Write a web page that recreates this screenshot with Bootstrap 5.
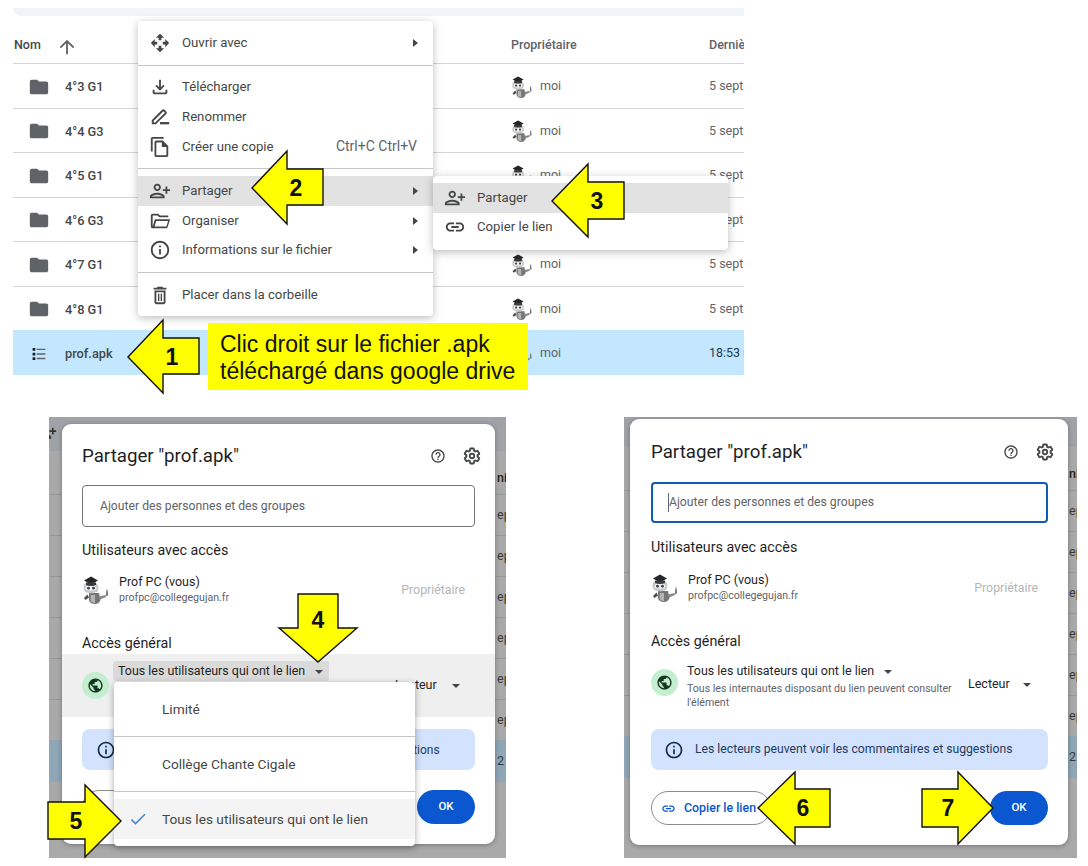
<!DOCTYPE html>
<html lang="fr">
<head>
<meta charset="UTF-8">
<title>Partager prof.apk</title>
<link href="https://cdn.jsdelivr.net/npm/bootstrap@5.3.0/dist/css/bootstrap.min.css" rel="stylesheet">
<style>
html, body { margin: 0; background: #fff; overflow: hidden; }
body { font-family: Roboto, "Liberation Sans", sans-serif; color: #3c4043; font-size: 12.5px; }
.planche { position: relative; width: 1088px; height: 866px; overflow: hidden; padding-top: 8px; }
.ico { width: 20px; height: 20px; fill: #444746; flex: none; }

/* liste drive */
.drive { margin-left: 13px; width: 731px; overflow: hidden; }
.bandeau { height: 8px; background: #f0f4f9; border-bottom-left-radius: 8px; }
.entete { height: 47px; color: #444746; font-weight: 500; padding-top: 20px; }
.entete .nom-h { margin-left: 1px; }
.entete .ico { width: 16px; height: 16px; margin-left: 19px; margin-top: 0; }
.ligne { height: 44.5px; border-top: 1px solid #d3d5d7; padding-top: 2px; }
.ligne-sel { background: #c2e7ff; border-top: 0; height: 45px; }
.c-nom { width: 498px; flex: none; }
.c-nom .ico { width: 22px; height: 22px; margin-left: 15px; margin-right: 15px; fill: #5f6368; }
.c-prop { width: 198px; flex: none; color: #5f6368; }
.c-date { white-space: nowrap; color: #5f6368; }
.ligne-sel .c-date { color: #1f3a4d; }
.nom-txt { font-weight: 500; color: #444746; font-size: 12.8px; }
.ava { width: 22px; height: 24px; margin-right: 7px; flex: none; }

/* menus */
.menu-ctx { --bs-dropdown-padding-y: 0; --bs-dropdown-padding-x: 0; border: 0; border-radius: 4px; box-shadow: 0 2px 8px rgba(60,64,67,.35); padding: 7px 0; font-size: 13.2px; }
.menu-a { left: 138px; top: 21px; width: 295px; height: 295px; z-index: 10; }
.menu-b { left: 433px; top: 176px; width: 295px; height: 74px; z-index: 11; }
.menu-ctx .dropdown-item { height: 29.6px; padding: 0 16px 0 12px; display: flex; align-items: center; gap: 12px; color: #444746; }
.menu-ctx .ico { width: 22px; height: 22px; margin: 0 -1px; }
.menu-ctx .dropdown-divider { margin: 7px 0; border-color: #c4c6c8; opacity: 1; }
.menu-ctx .hl { background: #e2e2e2; }
.raccourci { margin-left: auto; color: #5f6368; font-size: 14px; }
.tri-d { margin-left: auto; width: 0; height: 0; border-left: 5px solid #444746; border-top: 4.5px solid transparent; border-bottom: 4.5px solid transparent; margin-right: -0.5px; }
.tri-b { display: inline-block; width: 0; height: 0; border-top: 4px solid #444746; border-left: 4.5px solid transparent; border-right: 4.5px solid transparent; vertical-align: middle; }

.consigne { position: absolute; left: 208px; top: 323px; width: 320px; height: 67px; background: #ff0; color: #111; font-family: "Liberation Sans", Arial, sans-serif; font-size: 23px; line-height: 27px; padding: 8px 0 0 12px; z-index: 12; }

/* panneaux du bas */
.panneaux { margin-top: 42px; }
.fond { position: relative; height: 441px; background: #a9a9a9; overflow: hidden; flex: none; }
.fond-g { margin-left: 49px; width: 457px; }
.fond-d { margin-left: 118px; width: 453px; }
.f-haut { background: #9fa3a8; }
.fond-g .f-haut { height: 34px; }
.fond-d .f-haut { height: 30px; }
.f-tete, .f-ligne { height: 41px; border-top: 1px solid #979797; color: #3a3a3a; white-space: nowrap; font-size: 12.5px; }
.f-tete { height: 43px; border-top: 0; font-weight: 500; color: #222; padding-top: 18px; }
.f-sel { background: #8ea6b6; border-top: 0; height: 42px; }
.fond-g .f-ligne, .fond-g .f-tete { padding-left: 448px; }
.fond-d .f-ligne, .fond-d .f-tete { padding-left: 445px; }
.plus-fond { position: absolute; left: -12px; top: 5px; width: 20px; height: 20px; fill: #333; }

.dialogue { position: absolute; background: #fff; border-radius: 9px; box-shadow: 0 1px 5px rgba(0,0,0,.3); color: #1f1f1f; }
.dlg-g { left: 13px; top: 7px; width: 433px; height: 420px; padding: 14px 20px 20px; }
.dlg-d { left: 6px; top: 2px; width: 438px; height: 426px; padding: 15px 20px 21px 21px; }
.titre { font-size: 18.7px; line-height: 36px; color: #1f1f1f; }
.outils { gap: 17px; margin-right: -6px; align-items: center; }
.outils .ico-aide { width: 16px; height: 16px; }
.outils .ico-reglage { width: 18px; height: 18px; }
.champ { height: 42px; border: 1px solid #747775; border-radius: 4px; padding: 0 0 0 17px; font-size: 12.2px; color: #5f6368; margin-top: 11px; }
.dlg-d .champ { height: 41px; border: 2px solid #0f5cb4; margin-top: 12px; padding-left: 15px; }
.curseur { border-left: 1px solid #5a6a86; }
.soustitre { font-size: 14.3px; line-height: 20px; color: #1f1f1f; }
.st-u { margin-top: 13px; }
.dlg-d .st-u { margin-top: 14px; }
.util { height: 40px; margin-top: 10px; }
.dlg-d .util { margin-top: 11px; }
.util .ava { width: 28px; height: 30px; margin-right: 9px; margin-left: 0; }
.util-nom { font-size: 12.5px; line-height: 16px; color: #1f1f1f; }
.util-mail { font-size: 10.6px; line-height: 16px; color: #5f6368; }
.proprio { margin-left: auto; margin-right: 10px; color: #b3b5b7; font-size: 12.3px; }
.st-a { margin-top: 23px; }
.acces { height: 63px; margin: 1px -20px 0; padding: 7px 0 0 20px; }
.dlg-g .acces { background: #efefef; }
.dlg-d .acces { height: 64px; margin: 1px -20px 0 -21px; padding: 9px 0 0 21px; }
.globe { width: 27px; height: 27px; border-radius: 50%; background: #c4eed0; margin-top: 11px; margin-right: 4px; flex: none; }
.dlg-d .globe { margin-top: 8px; margin-right: 9px; }
.globe .ico { width: 17px; height: 17px; fill: #14381f; }
.acc-txt { width: 282px; flex: none; }
.dlg-d .acc-txt { width: 281px; }
.acc-titre { font-size: 12.45px; line-height: 20px; display: inline-block; padding: 0 5px; border-radius: 3px; color: #1f1f1f; }
.dlg-g .acc-titre { background: #dadada; }
.dlg-d .acc-titre { padding: 0; }
.acc-titre .tri-b { margin-left: 7px; margin-right: 1px; }
.acc-desc { font-size: 10.6px; line-height: 14px; color: #5f6368; width: 270px; padding-top: 1px; }
.lecteur { font-size: 12.5px; margin-top: 15px; color: #1f1f1f; }
.dlg-d .lecteur { margin-top: 14px; }
.lecteur .tri-b { margin-left: 13px; }
.dlg-g .lecteur .tri-b { margin-left: 15px; }
.infos { height: 41px; background: #d3e3fd; border-radius: 8px; margin-top: 12px; padding-left: 14px; gap: 11px; font-size: 12px; color: #1f3a5f; }
.dlg-d .infos { margin-top: 13px; padding-left: 13px; font-size: 12.2px; }
.infos .ico { fill: #0f2a4e; }
.pied { margin-top: 20px; }
.dlg-d .pied { margin-top: 21px; }
.btn-lien { height: 34px; width: 120px; border: 1px solid #8b8d8f; color: #0b57d0; font-size: 12.4px; font-weight: 500; gap: 8px; padding: 0 0 0 9px; }
.btn-lien .ico { width: 15px; height: 15px; fill: #0b57d0; }
.btn-ok { height: 34px; width: 58px; background: #0b57d0; border: 0; color: #fff; font-size: 11.5px; font-weight: 500; padding: 0; }

.menu-acces { left: 52px; top: 258px; width: 301px; height: 164px; padding: 0; border: 0; border-radius: 4px; box-shadow: 0 2px 7px rgba(0,0,0,.35); font-size: 13.7px; z-index: 5; }
.menu-acces .dropdown-item { height: 54px; padding: 0 0 0 48px; display: flex; align-items: center; color: #444746; }
.menu-acces .dropdown-divider { margin: 0; border-color: #c4c6c8; opacity: 1; }
.menu-acces .choisi { height: 40px; margin-top: 7px; padding-left: 14px; gap: 14px; background: #f4f4f4; }
.choisi .ico { fill: #4a84d4; }

/* fleches jaunes */
.annot { position: absolute; left: 0; top: 0; z-index: 20; pointer-events: none; }
.annot polygon { fill: #ff0; stroke: #111; stroke-width: 1.4; }
.annot text { font-family: "Liberation Sans", Arial, sans-serif; font-weight: 700; font-size: 23px; fill: #111; text-anchor: middle; dominant-baseline: central; }
</style>
</head>
<body>
<svg width="0" height="0" class="d-none">
  <symbol id="i-folder" viewBox="0 0 24 24"><path d="M10 4H4c-1.1 0-1.99.9-1.99 2L2 18c0 1.1.9 2 2 2h16c1.1 0 2-.9 2-2V8c0-1.1-.9-2-2-2h-8l-2-2z"/></symbol>
  <symbol id="i-up" viewBox="0 0 24 24"><path d="M4 12l1.41 1.41L11 7.83V20h2V7.83l5.58 5.59L20 12l-8-8-8 8z"/></symbol>
  <symbol id="i-move" viewBox="0 0 24 24"><path d="M12 2l4.500 4.300h-3v2.700h-3V6.300h-3zM12 22l-4.500-4.300h3V15h3v2.700h3zM2 12l4.300-4.500v3H9v3H6.300v3zM22 12l-4.300 4.500v-3H15v-3h2.700v-3z"/></symbol>
  <symbol id="i-down" viewBox="0 0 24 24"><path d="M12 16l-5-5 1.400-1.450 2.600 2.600V4h2v8.150l2.600-2.600L17 11l-5 5zM6 20c-.55 0-1.020-.2-1.410-.59A1.930 1.930 0 0 1 4 18v-3h2v3h12v-3h2v3c0 .55-.2 1.020-.59 1.410-.39.39-.86.59-1.410.59H6z"/></symbol>
  <symbol id="i-rename" viewBox="0 0 24 24"><path d="M3 20v-4.500L14.300 4.200c.8-.8 2-.8 2.800 0l1.700 1.700c.8.8.8 2 0 2.800L7.500 20H3zm2-2h1.700L17.400 7.300 15.700 5.600 5 16.300V18z"/><path d="M12 17.500h10V20H12z"/></symbol>
  <symbol id="i-copy" viewBox="0 0 24 24"><path d="M16 1H4c-1.100 0-2 .9-2 2v14h2V3h12V1zm-1 4H8c-1.100 0-1.990.9-1.990 2L6 21c0 1.100.89 2 1.990 2H19c1.100 0 2-.9 2-2V11l-6-6zM8 21V7h6v5h5v9H8z"/></symbol>
  <symbol id="i-person" viewBox="0 0 24 24"><g transform="matrix(-1 0 0 1 24 0)"><path d="M15 12c2.210 0 4-1.790 4-4s-1.790-4-4-4-4 1.790-4 4 1.790 4 4 4zm0-6c1.100 0 2 .9 2 2s-.9 2-2 2-2-.9-2-2 .9-2 2-2zm0 8c-2.670 0-8 1.340-8 4v2h16v-2c0-2.660-5.330-4-8-4zm-6 4c.22-.72 3.310-2 6-2 2.700 0 5.800 1.290 6 2H9zm-3-3v-3h3v-2H6V7H4v3H1v2h3v3h2z"/></g></symbol>
  <symbol id="i-open" viewBox="0 0 24 24"><path d="M4 20c-.55 0-1-.2-1.400-.6S2 18.500 2 18V6c0-.55.2-1 .6-1.400S3.450 4 4 4h6l2 2h9v2H11.170l-2-2H4v12l2.400-8H23l-2.600 8.600c-.13.43-.38.77-.73 1.020-.35.25-.74.38-1.170.38H4zm2.100-2h12.900l1.800-6H7.900l-1.800 6z"/></symbol>
  <symbol id="i-info" viewBox="0 0 24 24"><path d="M11 7h2v2h-2zm0 4h2v6h-2zm1-9C6.480 2 2 6.480 2 12s4.480 10 10 10 10-4.480 10-10S17.520 2 12 2zm0 18c-4.410 0-8-3.590-8-8s3.590-8 8-8 8 3.590 8 8-3.590 8-8 8z"/></symbol>
  <symbol id="i-trash" viewBox="0 0 24 24"><path d="M6 20c0 1.100.9 2 2 2h8c1.100 0 2-.9 2-2V7H6v13zM8 9h8v11H8V9zm7.500-5l-1-1h-5l-1 1H5v2h14V4h-3.500z"/><path d="M9.800 10.500h1.500v8H9.800zM12.700 10.500h1.500v8h-1.500z"/></symbol>
  <symbol id="i-link" viewBox="0 0 24 24"><path d="M17 7h-4v2h4c1.650 0 3 1.350 3 3s-1.350 3-3 3h-4v2h4c2.760 0 5-2.240 5-5s-2.240-5-5-5zm-6 8H7c-1.650 0-3-1.350-3-3s1.350-3 3-3h4V7H7c-2.760 0-5 2.240-5 5s2.240 5 5 5h4v-2zm-3-4h8v2H8z"/></symbol>
  <symbol id="i-help" viewBox="0 0 24 24"><path d="M11 18h2v-2h-2v2zm1-16C6.480 2 2 6.480 2 12s4.480 10 10 10 10-4.480 10-10S17.520 2 12 2zm0 18c-4.410 0-8-3.590-8-8s3.590-8 8-8 8 3.590 8 8-3.590 8-8 8zm0-14c-2.210 0-4 1.790-4 4h2c0-1.100.9-2 2-2s2 .9 2 2c0 2-3 1.750-3 5h2c0-2.250 3-2.500 3-5 0-2.210-1.790-4-4-4z"/></symbol>
  <symbol id="i-gear" viewBox="0 0 24 24"><path fill="none" stroke="#444746" stroke-width="2.400" d="M19.430 12.980c.04-.32.07-.64.07-.98s-.03-.66-.07-.98l2.110-1.650c.19-.15.24-.42.12-.64l-2-3.460c-.12-.22-.39-.3-.61-.22l-2.490 1c-.52-.4-1.080-.73-1.690-.98l-.38-2.650C14.460 2.180 14.250 2 14 2h-4c-.25 0-.46.18-.49.42l-.38 2.650c-.61.25-1.170.59-1.690.98l-2.490-1c-.23-.09-.49 0-.61.22l-2 3.460c-.13.22-.07.49.12.64l2.110 1.650c-.04.32-.07.65-.07.98s.03.66.07.98l-2.110 1.650c-.19.15-.24.42-.12.64l2 3.460c.12.22.39.3.61.22l2.490-1c.52.4 1.080.73 1.690.98l.38 2.650c.03.24.24.42.49.42h4c.25 0 .46-.18.49-.42l.38-2.650c.61-.25 1.170-.59 1.690-.98l2.490 1c.23.09.49 0 .61-.22l2-3.460c.12-.22.07-.49-.12-.64l-2.110-1.650z"/><circle cx="12" cy="12" r="3" fill="none" stroke="#444746" stroke-width="2.400"/></symbol>
  <symbol id="i-globe" viewBox="0 0 24 24"><path d="M12 2C6.480 2 2 6.480 2 12s4.480 10 10 10 10-4.480 10-10S17.520 2 12 2zm-1 17.930c-3.950-.49-7-3.850-7-7.930 0-.62.08-1.210.21-1.790L9 15v1c0 1.100.9 2 2 2v1.930zm6.900-2.540c-.26-.81-1-1.390-1.900-1.390h-1v-3c0-.55-.45-1-1-1H8v-2h2c.55 0 1-.45 1-1V7h2c1.100 0 2-.9 2-2v-.41c2.930 1.190 5 4.060 5 7.410 0 2.080-.8 3.970-2.100 5.390z"/></symbol>
  <symbol id="i-check" viewBox="0 0 24 24"><path d="M9 16.170L4.830 12l-1.420 1.410L9 19 21 7l-1.410-1.410z"/></symbol>
  <symbol id="i-liste" viewBox="0 0 24 24"><path d="M5 5.500h3v3H5zM5 10.500h3v3H5zM5 15.500h3v3H5z" fill="#202124"/><path d="M9.500 6.200h9.500v1.500H9.500zM9.500 11.200h9.500v1.500H9.500zM9.500 16.200h9.500v1.500H9.500z" fill="#5f6368"/></symbol>
  <symbol id="i-prof" viewBox="0 0 28 30">
    <path d="M7 18h10l1.500 7c-.8 2.800-2.800 4-5.500 4-3.200 0-5.500-1.500-6-4z" fill="#767676"/>
    <path d="M9 20h4v8c-2.500 0-4-1-4.400-3z" fill="#b5b5b5"/>
    <path d="M3 8.500C1 11 1 15 3.500 17c3 1.800 8 1.800 11 0 2.500-2 2.500-6 .5-8.500z" fill="#c9c9c9"/>
    <path d="M2 5.500L9 1.500 16 5.500 9 9.500z" fill="#262626"/>
    <path d="M4 7.500h10v2.500c-3 1.200-7 1.200-10 0z" fill="#3a3a3a"/>
    <rect x="3.500" y="11" width="11" height="4.500" rx="2.200" fill="#eceff2"/>
    <circle cx="6.500" cy="13.200" r="1.400" fill="#39414a"/><circle cx="11.500" cy="13.200" r="1.400" fill="#39414a"/>
    <path d="M5.500 19.500L2 23l1.500 2 3.500-2.500z" fill="#4d4d4d"/>
    <path d="M17 21.500l6.500-1.500 .6 2-6.500 2.800z" fill="#8a8a8a"/>
    <path d="M24.500 14.500l1 0 .6 6-2.200.5z" fill="#6f6f6f"/>
  </symbol>
</svg>

<div class="planche">
  <div class="drive">
    <div class="bandeau"></div>
    <div class="entete d-flex">
      <div class="c-nom d-flex"><span class="nom-h">Nom</span><svg class="ico"><use href="#i-up"/></svg></div>
      <div class="c-prop">Propriétaire</div>
      <div class="c-date">Dernière modification</div>
    </div>
    <div class="ligne d-flex align-items-center"><div class="c-nom d-flex align-items-center"><svg class="ico"><use href="#i-folder"/></svg><span class="nom-txt">4°3 G1</span></div><div class="c-prop d-flex align-items-center"><svg class="ava"><use href="#i-prof"/></svg>moi</div><div class="c-date">5 sept. 2023</div></div>
    <div class="ligne d-flex align-items-center"><div class="c-nom d-flex align-items-center"><svg class="ico"><use href="#i-folder"/></svg><span class="nom-txt">4°4 G3</span></div><div class="c-prop d-flex align-items-center"><svg class="ava"><use href="#i-prof"/></svg>moi</div><div class="c-date">5 sept. 2023</div></div>
    <div class="ligne d-flex align-items-center"><div class="c-nom d-flex align-items-center"><svg class="ico"><use href="#i-folder"/></svg><span class="nom-txt">4°5 G1</span></div><div class="c-prop d-flex align-items-center"><svg class="ava"><use href="#i-prof"/></svg>moi</div><div class="c-date">5 sept. 2023</div></div>
    <div class="ligne d-flex align-items-center"><div class="c-nom d-flex align-items-center"><svg class="ico"><use href="#i-folder"/></svg><span class="nom-txt">4°6 G3</span></div><div class="c-prop d-flex align-items-center"><svg class="ava"><use href="#i-prof"/></svg>moi</div><div class="c-date">5 sept. 2023</div></div>
    <div class="ligne d-flex align-items-center"><div class="c-nom d-flex align-items-center"><svg class="ico"><use href="#i-folder"/></svg><span class="nom-txt">4°7 G1</span></div><div class="c-prop d-flex align-items-center"><svg class="ava"><use href="#i-prof"/></svg>moi</div><div class="c-date">5 sept. 2023</div></div>
    <div class="ligne d-flex align-items-center"><div class="c-nom d-flex align-items-center"><svg class="ico"><use href="#i-folder"/></svg><span class="nom-txt">4°8 G1</span></div><div class="c-prop d-flex align-items-center"><svg class="ava"><use href="#i-prof"/></svg>moi</div><div class="c-date">5 sept. 2023</div></div>
    <div class="ligne ligne-sel d-flex align-items-center"><div class="c-nom d-flex align-items-center"><svg class="ico"><use href="#i-liste"/></svg><span class="nom-txt">prof.apk</span></div><div class="c-prop d-flex align-items-center"><svg class="ava"><use href="#i-prof"/></svg>moi</div><div class="c-date">18:53 moi</div></div>
  </div>

  <div class="dropdown-menu show menu-ctx menu-a">
    <div class="dropdown-item"><svg class="ico"><use href="#i-move"/></svg>Ouvrir avec<span class="tri-d"></span></div>
    <hr class="dropdown-divider">
    <div class="dropdown-item"><svg class="ico"><use href="#i-down"/></svg>Télécharger</div>
    <div class="dropdown-item"><svg class="ico"><use href="#i-rename"/></svg>Renommer</div>
    <div class="dropdown-item"><svg class="ico"><use href="#i-copy"/></svg>Créer une copie<span class="raccourci">Ctrl+C Ctrl+V</span></div>
    <hr class="dropdown-divider">
    <div class="dropdown-item hl"><svg class="ico"><use href="#i-person"/></svg>Partager<span class="tri-d"></span></div>
    <div class="dropdown-item"><svg class="ico"><use href="#i-open"/></svg>Organiser<span class="tri-d"></span></div>
    <div class="dropdown-item"><svg class="ico"><use href="#i-info"/></svg>Informations sur le fichier<span class="tri-d"></span></div>
    <hr class="dropdown-divider">
    <div class="dropdown-item"><svg class="ico"><use href="#i-trash"/></svg>Placer dans la corbeille</div>
  </div>
  <div class="dropdown-menu show menu-ctx menu-b">
    <div class="dropdown-item hl"><svg class="ico"><use href="#i-person"/></svg>Partager</div>
    <div class="dropdown-item"><svg class="ico"><use href="#i-link"/></svg>Copier le lien</div>
  </div>

  <div class="consigne">Clic droit sur le fichier .apk<br>téléchargé dans google drive</div>

  <div class="panneaux d-flex">
    <div class="fond fond-g">
      <div class="f-haut"></div>
      <svg class="plus-fond"><use href="#i-person"/></svg>
      <div class="f-tete">nière</div>
      <div class="f-ligne d-flex align-items-center">ept.</div>
      <div class="f-ligne d-flex align-items-center">ept.</div>
      <div class="f-ligne d-flex align-items-center">ept.</div>
      <div class="f-ligne d-flex align-items-center">ept.</div>
      <div class="f-ligne d-flex align-items-center">ept.</div>
      <div class="f-ligne d-flex align-items-center">ept.</div>
      <div class="f-ligne f-sel d-flex align-items-center">2</div>
      <div class="dialogue dlg-g">
        <div class="d-flex justify-content-between align-items-center">
          <div class="titre">Partager "prof.apk"</div>
          <div class="outils d-flex"><svg class="ico ico-aide"><use href="#i-help"/></svg><svg class="ico ico-reglage"><use href="#i-gear"/></svg></div>
        </div>
        <div class="champ d-flex align-items-center">Ajouter des personnes et des groupes</div>
        <div class="soustitre st-u">Utilisateurs avec accès</div>
        <div class="util d-flex align-items-center">
          <svg class="ava"><use href="#i-prof"/></svg>
          <div><div class="util-nom">Prof PC (vous)</div><div class="util-mail">profpc@collegegujan.fr</div></div>
          <div class="proprio">Propriétaire</div>
        </div>
        <div class="soustitre st-a">Accès général</div>
        <div class="acces d-flex">
          <div class="globe d-flex align-items-center justify-content-center"><svg class="ico"><use href="#i-globe"/></svg></div>
          <div class="acc-txt"><div class="acc-titre">Tous les utilisateurs qui ont le lien <span class="tri-b"></span></div></div>
          <div class="lecteur">Lecteur<span class="tri-b"></span></div>
        </div>
        <div class="infos d-flex align-items-center"><svg class="ico"><use href="#i-info"/></svg>Les lecteurs peuvent voir les commentaires et suggestions</div>
        <div class="pied d-flex justify-content-between">
          <button class="btn btn-lien rounded-pill d-flex align-items-center"><svg class="ico"><use href="#i-link"/></svg>Copier le lien</button>
          <button class="btn btn-ok rounded-pill">OK</button>
        </div>
        <div class="dropdown-menu show menu-acces">
          <div class="dropdown-item">Limité</div>
          <hr class="dropdown-divider">
          <div class="dropdown-item">Collège Chante Cigale</div>
          <hr class="dropdown-divider">
          <div class="dropdown-item choisi"><svg class="ico"><use href="#i-check"/></svg>Tous les utilisateurs qui ont le lien</div>
        </div>
      </div>
    </div>

    <div class="fond fond-d">
      <div class="f-haut"></div>
      <div class="f-tete">nière</div>
      <div class="f-ligne d-flex align-items-center">ept.</div>
      <div class="f-ligne d-flex align-items-center">ept.</div>
      <div class="f-ligne d-flex align-items-center">ept.</div>
      <div class="f-ligne d-flex align-items-center">ept.</div>
      <div class="f-ligne d-flex align-items-center">ept.</div>
      <div class="f-ligne d-flex align-items-center">ept.</div>
      <div class="f-ligne f-sel d-flex align-items-center">2</div>
      <div class="dialogue dlg-d">
        <div class="d-flex justify-content-between align-items-center">
          <div class="titre">Partager "prof.apk"</div>
          <div class="outils d-flex"><svg class="ico ico-aide"><use href="#i-help"/></svg><svg class="ico ico-reglage"><use href="#i-gear"/></svg></div>
        </div>
        <div class="champ d-flex align-items-center"><span class="curseur">Ajouter des personnes et des groupes</span></div>
        <div class="soustitre st-u">Utilisateurs avec accès</div>
        <div class="util d-flex align-items-center">
          <svg class="ava"><use href="#i-prof"/></svg>
          <div><div class="util-nom">Prof PC (vous)</div><div class="util-mail">profpc@collegegujan.fr</div></div>
          <div class="proprio">Propriétaire</div>
        </div>
        <div class="soustitre st-a">Accès général</div>
        <div class="acces d-flex">
          <div class="globe d-flex align-items-center justify-content-center"><svg class="ico"><use href="#i-globe"/></svg></div>
          <div class="acc-txt">
            <div class="acc-titre">Tous les utilisateurs qui ont le lien <span class="tri-b"></span></div>
            <div class="acc-desc">Tous les internautes disposant du lien peuvent consulter l'élément</div>
          </div>
          <div class="lecteur">Lecteur<span class="tri-b"></span></div>
        </div>
        <div class="infos d-flex align-items-center"><svg class="ico"><use href="#i-info"/></svg>Les lecteurs peuvent voir les commentaires et suggestions</div>
        <div class="pied d-flex justify-content-between">
          <button class="btn btn-lien rounded-pill d-flex align-items-center"><svg class="ico"><use href="#i-link"/></svg>Copier le lien</button>
          <button class="btn btn-ok rounded-pill">OK</button>
        </div>
      </div>
    </div>
  </div>

  <svg class="annot" width="1088" height="866">
    <polygon points="128,357 163,320 163,338 199,338 199,374 163,374 163,393"/><text x="172" y="357">1</text>
    <polygon points="252,188 287,151 287,169 323,169 323,205 287,205 287,224"/><text x="296" y="188">2</text>
    <polygon points="552,201 588,164 588,182 624,182 624,219 588,219 588,237"/><text x="597" y="201">3</text>
    <polygon points="318,662 279,628 298,628 298,594 338,594 338,628 357,628"/><text x="318" y="620">4</text>
    <polygon points="121,821 85,785 85,802 48,802 48,839 85,839 85,857"/><text x="76" y="821">5</text>
    <polygon points="758,808 795,772 795,789 830,789 830,827 795,827 795,844"/><text x="803" y="808">6</text>
    <polygon points="993,808 958,772 958,789 922,789 922,827 958,827 958,844"/><text x="948" y="808">7</text>
  </svg>
</div>
<script src="https://cdn.jsdelivr.net/npm/bootstrap@5.3.0/dist/js/bootstrap.bundle.min.js"></script>
</body>
</html>
